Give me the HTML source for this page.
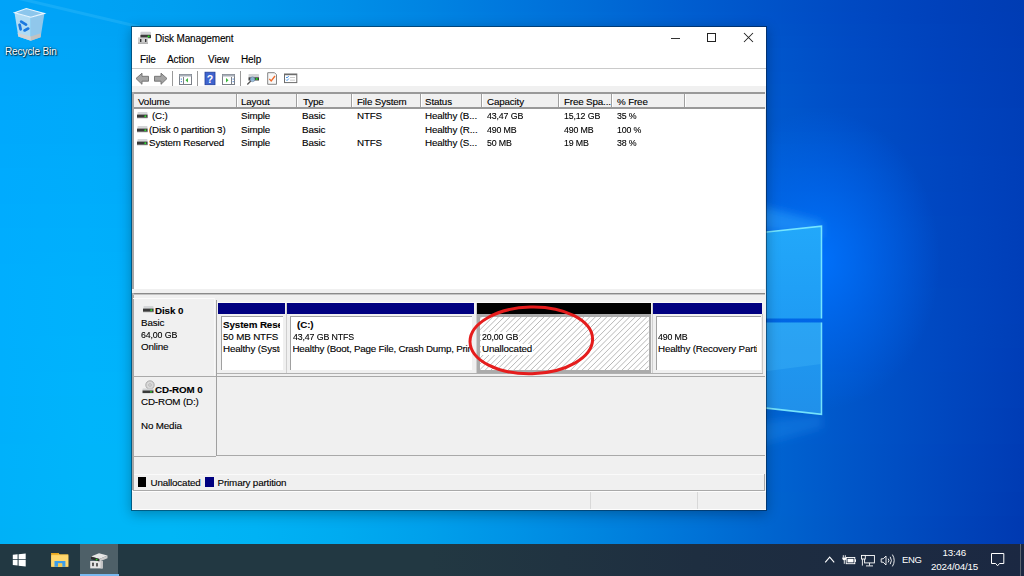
<!DOCTYPE html>
<html><head><meta charset="utf-8">
<style>
*{margin:0;padding:0;box-sizing:border-box}
html,body{width:1024px;height:576px;overflow:hidden}
body{position:relative;font-family:"Liberation Sans",sans-serif;font-size:9.8px;letter-spacing:-0.15px;color:#000;background:linear-gradient(76deg, rgb(0,162,249) 0%, rgb(0,170,247) 10%, rgb(0,170,244) 20%, rgb(0,162,239) 30%, rgb(0,149,232) 40%, rgb(0,133,225) 50%, rgb(0,114,216) 60%, rgb(0,95,206) 70%, rgb(0,78,197) 80%, rgb(0,64,187) 90%, rgb(0,54,177) 100%)}
.a{position:absolute}
.t{position:absolute;white-space:nowrap;line-height:12px;-webkit-text-stroke:0.12px currentColor}
.b{font-weight:bold;-webkit-text-stroke:0}
svg{position:absolute;overflow:visible}
</style></head><body>
<div class="a" style="left:0px;top:0px;width:1024px;height:12px;background:linear-gradient(90deg, rgb(0,163,249) 0.0%, rgb(0,163,245) 8.3%, rgb(0,159,241) 16.7%, rgb(0,152,237) 25.0%, rgb(0,143,232) 33.3%, rgb(0,132,226) 41.7%, rgb(0,119,221) 50.0%, rgb(0,107,214) 58.3%, rgb(0,94,208) 66.7%, rgb(0,83,201) 75.0%, rgb(0,73,194) 83.3%, rgb(0,65,187) 91.7%, rgb(0,60,179) 100.0%)"></div>
<div class="a" style="left:0px;top:12px;width:1024px;height:12px;background:linear-gradient(90deg, rgb(0,163,249) 0.0%, rgb(0,163,246) 8.3%, rgb(0,160,242) 16.7%, rgb(0,153,237) 25.0%, rgb(0,144,233) 33.3%, rgb(0,133,227) 41.7%, rgb(0,120,221) 50.0%, rgb(0,108,215) 58.3%, rgb(0,95,209) 66.7%, rgb(0,83,202) 75.0%, rgb(0,73,195) 83.3%, rgb(0,65,187) 91.7%, rgb(0,60,180) 100.0%)"></div>
<div class="a" style="left:0px;top:24px;width:1024px;height:12px;background:linear-gradient(90deg, rgb(0,164,250) 0.0%, rgb(0,164,246) 8.3%, rgb(0,161,243) 16.7%, rgb(0,154,238) 25.0%, rgb(0,145,233) 33.3%, rgb(0,134,228) 41.7%, rgb(0,121,222) 50.0%, rgb(0,109,216) 58.3%, rgb(0,96,209) 66.7%, rgb(0,84,202) 75.0%, rgb(0,74,195) 83.3%, rgb(0,66,188) 91.7%, rgb(0,60,180) 100.0%)"></div>
<div class="a" style="left:0px;top:36px;width:1024px;height:12px;background:linear-gradient(90deg, rgb(0,165,250) 0.0%, rgb(0,165,247) 8.3%, rgb(0,161,243) 16.7%, rgb(0,155,239) 25.0%, rgb(0,146,234) 33.3%, rgb(0,134,229) 41.7%, rgb(0,122,223) 50.0%, rgb(0,109,217) 58.3%, rgb(0,97,210) 66.7%, rgb(0,85,203) 75.0%, rgb(0,74,196) 83.3%, rgb(0,66,188) 91.7%, rgb(0,60,181) 100.0%)"></div>
<div class="a" style="left:0px;top:48px;width:1024px;height:12px;background:linear-gradient(90deg, rgb(0,165,251) 0.0%, rgb(0,166,247) 8.3%, rgb(0,162,244) 16.7%, rgb(0,156,239) 25.0%, rgb(0,147,235) 33.3%, rgb(0,135,229) 41.7%, rgb(0,123,223) 50.0%, rgb(0,110,217) 58.3%, rgb(0,98,211) 66.7%, rgb(0,86,204) 75.0%, rgb(0,75,196) 83.3%, rgb(0,66,189) 91.7%, rgb(0,61,181) 100.0%)"></div>
<div class="a" style="left:0px;top:60px;width:1024px;height:12px;background:linear-gradient(90deg, rgb(0,166,251) 0.0%, rgb(0,166,248) 8.3%, rgb(0,163,244) 16.7%, rgb(0,157,240) 25.0%, rgb(0,147,235) 33.3%, rgb(0,136,230) 41.7%, rgb(0,124,224) 50.0%, rgb(0,111,218) 58.3%, rgb(0,98,211) 66.7%, rgb(0,86,204) 75.0%, rgb(0,76,197) 83.3%, rgb(0,67,189) 91.7%, rgb(0,61,181) 100.0%)"></div>
<div class="a" style="left:0px;top:72px;width:1024px;height:12px;background:linear-gradient(90deg, rgb(0,167,251) 0.0%, rgb(0,167,248) 8.3%, rgb(0,164,245) 16.7%, rgb(0,157,241) 25.0%, rgb(0,148,236) 33.3%, rgb(0,137,230) 41.7%, rgb(0,125,225) 50.0%, rgb(0,112,218) 58.3%, rgb(0,99,212) 66.7%, rgb(0,87,205) 75.0%, rgb(0,76,197) 83.3%, rgb(0,67,190) 91.7%, rgb(0,61,182) 100.0%)"></div>
<div class="a" style="left:0px;top:84px;width:1024px;height:12px;background:linear-gradient(90deg, rgb(0,167,252) 0.0%, rgb(0,168,249) 8.3%, rgb(0,165,245) 16.7%, rgb(0,158,241) 25.0%, rgb(0,149,236) 33.3%, rgb(0,138,231) 41.7%, rgb(0,126,225) 50.0%, rgb(0,113,219) 58.3%, rgb(0,100,212) 66.7%, rgb(0,88,205) 75.0%, rgb(0,77,198) 83.3%, rgb(0,68,190) 91.7%, rgb(0,61,182) 100.0%)"></div>
<div class="a" style="left:0px;top:96px;width:1024px;height:12px;background:linear-gradient(90deg, rgb(0,168,252) 0.0%, rgb(0,169,249) 8.3%, rgb(0,165,246) 16.7%, rgb(0,159,242) 25.0%, rgb(0,150,237) 33.3%, rgb(0,139,232) 41.7%, rgb(0,127,226) 50.0%, rgb(0,114,220) 58.3%, rgb(0,101,213) 66.7%, rgb(0,88,206) 75.0%, rgb(0,77,198) 83.3%, rgb(0,68,190) 91.7%, rgb(0,61,182) 100.0%)"></div>
<div class="a" style="left:0px;top:108px;width:1024px;height:12px;background:linear-gradient(90deg, rgb(0,168,252) 0.0%, rgb(0,169,250) 8.3%, rgb(0,166,246) 16.7%, rgb(0,160,242) 25.0%, rgb(0,151,237) 33.3%, rgb(0,140,232) 41.7%, rgb(0,128,226) 50.0%, rgb(0,115,220) 58.3%, rgb(0,101,213) 66.7%, rgb(0,89,206) 75.0%, rgb(0,78,199) 83.3%, rgb(0,68,191) 91.7%, rgb(0,62,183) 100.0%)"></div>
<div class="a" style="left:0px;top:120px;width:1024px;height:12px;background:linear-gradient(90deg, rgb(0,169,253) 0.0%, rgb(0,170,250) 8.3%, rgb(0,167,247) 16.7%, rgb(0,161,243) 25.0%, rgb(0,152,238) 33.3%, rgb(0,141,233) 41.7%, rgb(0,128,227) 50.0%, rgb(0,115,221) 58.3%, rgb(0,102,214) 66.7%, rgb(0,89,207) 75.0%, rgb(0,78,199) 83.3%, rgb(0,69,191) 91.7%, rgb(0,62,183) 100.0%)"></div>
<div class="a" style="left:0px;top:132px;width:1024px;height:12px;background:linear-gradient(90deg, rgb(0,169,253) 0.0%, rgb(0,170,250) 8.3%, rgb(0,168,247) 16.7%, rgb(0,162,243) 25.0%, rgb(0,153,238) 33.3%, rgb(0,142,233) 41.7%, rgb(0,129,227) 50.0%, rgb(0,116,221) 58.3%, rgb(0,103,214) 66.7%, rgb(0,90,207) 75.0%, rgb(0,79,199) 83.3%, rgb(0,69,191) 91.7%, rgb(0,62,183) 100.0%)"></div>
<div class="a" style="left:0px;top:144px;width:1024px;height:12px;background:linear-gradient(90deg, rgb(0,170,253) 0.0%, rgb(0,171,251) 8.3%, rgb(0,168,247) 16.7%, rgb(0,162,243) 25.0%, rgb(0,153,239) 33.3%, rgb(0,142,234) 41.7%, rgb(0,130,228) 50.0%, rgb(0,117,222) 58.3%, rgb(0,103,215) 66.7%, rgb(0,91,208) 75.0%, rgb(0,79,200) 83.3%, rgb(0,69,192) 91.7%, rgb(0,62,183) 100.0%)"></div>
<div class="a" style="left:0px;top:156px;width:1024px;height:12px;background:linear-gradient(90deg, rgb(0,170,253) 0.0%, rgb(0,172,251) 8.3%, rgb(0,169,248) 16.7%, rgb(0,163,244) 25.0%, rgb(0,154,239) 33.3%, rgb(0,143,234) 41.7%, rgb(0,131,228) 50.0%, rgb(0,118,222) 58.3%, rgb(0,104,215) 66.7%, rgb(0,91,208) 75.0%, rgb(0,79,200) 83.3%, rgb(0,70,192) 91.7%, rgb(0,62,184) 100.0%)"></div>
<div class="a" style="left:0px;top:168px;width:1024px;height:12px;background:linear-gradient(90deg, rgb(0,171,254) 0.0%, rgb(0,172,251) 8.3%, rgb(0,170,248) 16.7%, rgb(0,164,244) 25.0%, rgb(0,155,240) 33.3%, rgb(0,144,235) 41.7%, rgb(0,132,229) 50.0%, rgb(0,118,222) 58.3%, rgb(0,105,216) 66.7%, rgb(0,92,208) 75.0%, rgb(0,80,200) 83.3%, rgb(0,70,192) 91.7%, rgb(0,62,184) 100.0%)"></div>
<div class="a" style="left:0px;top:180px;width:1024px;height:12px;background:linear-gradient(90deg, rgb(0,171,254) 0.0%, rgb(0,173,251) 8.3%, rgb(0,170,248) 16.7%, rgb(0,164,245) 25.0%, rgb(0,156,240) 33.3%, rgb(0,145,235) 41.7%, rgb(0,132,229) 50.0%, rgb(0,119,223) 58.3%, rgb(0,105,216) 66.7%, rgb(0,92,209) 75.0%, rgb(0,80,201) 83.3%, rgb(0,70,192) 91.7%, rgb(0,62,184) 100.0%)"></div>
<div class="a" style="left:0px;top:192px;width:1024px;height:12px;background:linear-gradient(90deg, rgb(0,171,254) 0.0%, rgb(0,173,252) 8.3%, rgb(0,171,249) 16.7%, rgb(0,165,245) 25.0%, rgb(0,156,240) 33.3%, rgb(0,146,235) 41.7%, rgb(0,133,230) 50.0%, rgb(0,120,223) 58.3%, rgb(0,106,216) 66.7%, rgb(0,93,209) 75.0%, rgb(0,81,201) 83.3%, rgb(0,70,193) 91.7%, rgb(0,62,184) 100.0%)"></div>
<div class="a" style="left:0px;top:204px;width:1024px;height:12px;background:linear-gradient(90deg, rgb(0,172,254) 0.0%, rgb(0,174,252) 8.3%, rgb(0,172,249) 16.7%, rgb(0,166,245) 25.0%, rgb(0,157,241) 33.3%, rgb(0,146,236) 41.7%, rgb(0,134,230) 50.0%, rgb(0,120,224) 58.3%, rgb(0,107,217) 66.7%, rgb(0,93,209) 75.0%, rgb(0,81,201) 83.3%, rgb(0,70,193) 91.7%, rgb(0,62,184) 100.0%)"></div>
<div class="a" style="left:0px;top:216px;width:1024px;height:12px;background:linear-gradient(90deg, rgb(0,172,254) 0.0%, rgb(0,174,252) 8.3%, rgb(0,172,249) 16.7%, rgb(0,167,245) 25.0%, rgb(0,158,241) 33.3%, rgb(0,147,236) 41.7%, rgb(0,135,230) 50.0%, rgb(0,121,224) 58.3%, rgb(0,107,217) 66.7%, rgb(0,94,209) 75.0%, rgb(0,81,201) 83.3%, rgb(0,71,193) 91.7%, rgb(0,62,184) 100.0%)"></div>
<div class="a" style="left:0px;top:228px;width:1024px;height:12px;background:linear-gradient(90deg, rgb(0,173,254) 0.0%, rgb(0,175,252) 8.3%, rgb(0,173,249) 16.7%, rgb(0,167,246) 25.0%, rgb(0,159,241) 33.3%, rgb(0,148,236) 41.7%, rgb(0,135,231) 50.0%, rgb(0,122,224) 58.3%, rgb(0,108,217) 66.7%, rgb(0,94,210) 75.0%, rgb(0,82,202) 83.3%, rgb(0,71,193) 91.7%, rgb(0,62,184) 100.0%)"></div>
<div class="a" style="left:0px;top:240px;width:1024px;height:12px;background:linear-gradient(90deg, rgb(0,173,254) 0.0%, rgb(0,175,252) 8.3%, rgb(0,173,249) 16.7%, rgb(0,168,246) 25.0%, rgb(0,159,242) 33.3%, rgb(0,148,237) 41.7%, rgb(0,136,231) 50.0%, rgb(0,122,224) 58.3%, rgb(0,108,217) 66.7%, rgb(0,95,210) 75.0%, rgb(0,82,202) 83.3%, rgb(0,71,193) 91.7%, rgb(0,62,184) 100.0%)"></div>
<div class="a" style="left:0px;top:252px;width:1024px;height:12px;background:linear-gradient(90deg, rgb(0,173,254) 0.0%, rgb(0,176,252) 8.3%, rgb(0,174,250) 16.7%, rgb(0,168,246) 25.0%, rgb(0,160,242) 33.3%, rgb(0,149,237) 41.7%, rgb(0,137,231) 50.0%, rgb(0,123,225) 58.3%, rgb(0,109,218) 66.7%, rgb(0,95,210) 75.0%, rgb(0,82,202) 83.3%, rgb(0,71,193) 91.7%, rgb(0,62,184) 100.0%)"></div>
<div class="a" style="left:0px;top:264px;width:1024px;height:12px;background:linear-gradient(90deg, rgb(0,174,254) 0.0%, rgb(0,176,252) 8.3%, rgb(0,175,250) 16.7%, rgb(0,169,246) 25.0%, rgb(0,161,242) 33.3%, rgb(0,150,237) 41.7%, rgb(0,137,231) 50.0%, rgb(0,124,225) 58.3%, rgb(0,109,218) 66.7%, rgb(0,96,210) 75.0%, rgb(0,83,202) 83.3%, rgb(0,71,193) 91.7%, rgb(0,62,184) 100.0%)"></div>
<div class="a" style="left:0px;top:276px;width:1024px;height:12px;background:linear-gradient(90deg, rgb(0,174,254) 0.0%, rgb(0,177,252) 8.3%, rgb(0,175,250) 16.7%, rgb(0,170,246) 25.0%, rgb(0,161,242) 33.3%, rgb(0,150,237) 41.7%, rgb(0,138,231) 50.0%, rgb(0,124,225) 58.3%, rgb(0,110,218) 66.7%, rgb(0,96,210) 75.0%, rgb(0,83,202) 83.3%, rgb(0,71,193) 91.7%, rgb(0,62,184) 100.0%)"></div>
<div class="a" style="left:0px;top:288px;width:1024px;height:12px;background:linear-gradient(90deg, rgb(0,174,254) 0.0%, rgb(0,177,252) 8.3%, rgb(0,176,250) 16.7%, rgb(0,170,247) 25.0%, rgb(0,162,242) 33.3%, rgb(0,151,237) 41.7%, rgb(0,138,232) 50.0%, rgb(0,125,225) 58.3%, rgb(0,110,218) 66.7%, rgb(0,96,210) 75.0%, rgb(0,83,202) 83.3%, rgb(0,72,193) 91.7%, rgb(0,62,184) 100.0%)"></div>
<div class="a" style="left:0px;top:300px;width:1024px;height:12px;background:linear-gradient(90deg, rgb(0,175,254) 0.0%, rgb(0,178,252) 8.3%, rgb(0,176,250) 16.7%, rgb(0,171,247) 25.0%, rgb(0,162,242) 33.3%, rgb(0,152,238) 41.7%, rgb(0,139,232) 50.0%, rgb(0,125,225) 58.3%, rgb(0,111,218) 66.7%, rgb(0,97,210) 75.0%, rgb(0,83,202) 83.3%, rgb(0,72,193) 91.7%, rgb(0,62,184) 100.0%)"></div>
<div class="a" style="left:0px;top:312px;width:1024px;height:12px;background:linear-gradient(90deg, rgb(0,175,254) 0.0%, rgb(0,178,252) 8.3%, rgb(0,177,250) 16.7%, rgb(0,171,247) 25.0%, rgb(0,163,243) 33.3%, rgb(0,152,238) 41.7%, rgb(0,140,232) 50.0%, rgb(0,126,225) 58.3%, rgb(0,111,218) 66.7%, rgb(0,97,210) 75.0%, rgb(0,84,202) 83.3%, rgb(0,72,193) 91.7%, rgb(0,62,184) 100.0%)"></div>
<div class="a" style="left:0px;top:324px;width:1024px;height:12px;background:linear-gradient(90deg, rgb(0,175,254) 0.0%, rgb(0,178,252) 8.3%, rgb(0,177,250) 16.7%, rgb(0,172,247) 25.0%, rgb(0,164,243) 33.3%, rgb(0,153,238) 41.7%, rgb(0,140,232) 50.0%, rgb(0,126,226) 58.3%, rgb(0,112,218) 66.7%, rgb(0,97,211) 75.0%, rgb(0,84,202) 83.3%, rgb(0,72,193) 91.7%, rgb(0,62,183) 100.0%)"></div>
<div class="a" style="left:0px;top:336px;width:1024px;height:12px;background:linear-gradient(90deg, rgb(0,175,254) 0.0%, rgb(0,179,252) 8.3%, rgb(0,177,250) 16.7%, rgb(0,172,247) 25.0%, rgb(0,164,243) 33.3%, rgb(0,153,238) 41.7%, rgb(0,141,232) 50.0%, rgb(0,127,226) 58.3%, rgb(0,112,218) 66.7%, rgb(0,98,211) 75.0%, rgb(0,84,202) 83.3%, rgb(0,72,193) 91.7%, rgb(0,62,183) 100.0%)"></div>
<div class="a" style="left:0px;top:348px;width:1024px;height:12px;background:linear-gradient(90deg, rgb(0,175,253) 0.0%, rgb(0,179,252) 8.3%, rgb(0,178,250) 16.7%, rgb(0,173,247) 25.0%, rgb(0,165,243) 33.3%, rgb(0,154,238) 41.7%, rgb(0,141,232) 50.0%, rgb(0,127,226) 58.3%, rgb(0,113,218) 66.7%, rgb(0,98,210) 75.0%, rgb(0,84,202) 83.3%, rgb(0,72,193) 91.7%, rgb(0,61,183) 100.0%)"></div>
<div class="a" style="left:0px;top:360px;width:1024px;height:12px;background:linear-gradient(90deg, rgb(0,176,253) 0.0%, rgb(0,179,252) 8.3%, rgb(0,178,250) 16.7%, rgb(0,173,247) 25.0%, rgb(0,165,243) 33.3%, rgb(0,154,238) 41.7%, rgb(0,142,232) 50.0%, rgb(0,128,226) 58.3%, rgb(0,113,218) 66.7%, rgb(0,98,210) 75.0%, rgb(0,84,202) 83.3%, rgb(0,72,193) 91.7%, rgb(0,61,183) 100.0%)"></div>
<div class="a" style="left:0px;top:372px;width:1024px;height:12px;background:linear-gradient(90deg, rgb(0,176,253) 0.0%, rgb(0,180,252) 8.3%, rgb(0,179,250) 16.7%, rgb(0,174,247) 25.0%, rgb(0,166,243) 33.3%, rgb(0,155,238) 41.7%, rgb(0,142,232) 50.0%, rgb(0,128,226) 58.3%, rgb(0,113,218) 66.7%, rgb(0,99,210) 75.0%, rgb(0,85,202) 83.3%, rgb(0,72,192) 91.7%, rgb(0,61,182) 100.0%)"></div>
<div class="a" style="left:0px;top:384px;width:1024px;height:12px;background:linear-gradient(90deg, rgb(0,176,253) 0.0%, rgb(0,180,252) 8.3%, rgb(0,179,250) 16.7%, rgb(0,174,247) 25.0%, rgb(0,166,243) 33.3%, rgb(0,155,238) 41.7%, rgb(0,143,232) 50.0%, rgb(0,129,226) 58.3%, rgb(0,114,218) 66.7%, rgb(0,99,210) 75.0%, rgb(0,85,202) 83.3%, rgb(0,72,192) 91.7%, rgb(0,61,182) 100.0%)"></div>
<div class="a" style="left:0px;top:396px;width:1024px;height:12px;background:linear-gradient(90deg, rgb(0,176,252) 0.0%, rgb(0,180,251) 8.3%, rgb(0,179,249) 16.7%, rgb(0,175,246) 25.0%, rgb(0,167,243) 33.3%, rgb(0,156,238) 41.7%, rgb(0,143,232) 50.0%, rgb(0,129,226) 58.3%, rgb(0,114,218) 66.7%, rgb(0,99,210) 75.0%, rgb(0,85,201) 83.3%, rgb(0,72,192) 91.7%, rgb(0,61,182) 100.0%)"></div>
<div class="a" style="left:0px;top:408px;width:1024px;height:12px;background:linear-gradient(90deg, rgb(0,176,252) 0.0%, rgb(0,180,251) 8.3%, rgb(0,180,249) 16.7%, rgb(0,175,246) 25.0%, rgb(0,167,242) 33.3%, rgb(0,156,238) 41.7%, rgb(0,144,232) 50.0%, rgb(0,129,225) 58.3%, rgb(0,114,218) 66.7%, rgb(0,99,210) 75.0%, rgb(0,85,201) 83.3%, rgb(0,72,192) 91.7%, rgb(0,60,181) 100.0%)"></div>
<div class="a" style="left:0px;top:420px;width:1024px;height:12px;background:linear-gradient(90deg, rgb(0,176,252) 0.0%, rgb(0,181,251) 8.3%, rgb(0,180,249) 16.7%, rgb(0,176,246) 25.0%, rgb(0,168,242) 33.3%, rgb(0,157,238) 41.7%, rgb(0,144,232) 50.0%, rgb(0,130,225) 58.3%, rgb(0,115,218) 66.7%, rgb(0,100,210) 75.0%, rgb(0,85,201) 83.3%, rgb(0,72,191) 91.7%, rgb(0,60,181) 100.0%)"></div>
<div class="a" style="left:0px;top:432px;width:1024px;height:12px;background:linear-gradient(90deg, rgb(0,176,251) 0.0%, rgb(0,181,251) 8.3%, rgb(0,180,249) 16.7%, rgb(0,176,246) 25.0%, rgb(0,168,242) 33.3%, rgb(0,157,237) 41.7%, rgb(0,144,232) 50.0%, rgb(0,130,225) 58.3%, rgb(0,115,218) 66.7%, rgb(0,100,210) 75.0%, rgb(0,85,201) 83.3%, rgb(0,72,191) 91.7%, rgb(0,60,181) 100.0%)"></div>
<div class="a" style="left:0px;top:444px;width:1024px;height:12px;background:linear-gradient(90deg, rgb(0,177,251) 0.0%, rgb(0,181,250) 8.3%, rgb(0,181,249) 16.7%, rgb(0,176,246) 25.0%, rgb(0,168,242) 33.3%, rgb(0,158,237) 41.7%, rgb(0,145,232) 50.0%, rgb(0,130,225) 58.3%, rgb(0,115,218) 66.7%, rgb(0,100,209) 75.0%, rgb(0,85,200) 83.3%, rgb(0,71,191) 91.7%, rgb(0,59,180) 100.0%)"></div>
<div class="a" style="left:0px;top:456px;width:1024px;height:12px;background:linear-gradient(90deg, rgb(0,177,251) 0.0%, rgb(0,181,250) 8.3%, rgb(0,181,248) 16.7%, rgb(0,177,246) 25.0%, rgb(0,169,242) 33.3%, rgb(0,158,237) 41.7%, rgb(0,145,231) 50.0%, rgb(0,131,225) 58.3%, rgb(0,116,217) 66.7%, rgb(0,100,209) 75.0%, rgb(0,85,200) 83.3%, rgb(0,71,190) 91.7%, rgb(0,59,180) 100.0%)"></div>
<div class="a" style="left:0px;top:468px;width:1024px;height:12px;background:linear-gradient(90deg, rgb(0,177,250) 0.0%, rgb(0,181,250) 8.3%, rgb(0,181,248) 16.7%, rgb(0,177,245) 25.0%, rgb(0,169,242) 33.3%, rgb(0,158,237) 41.7%, rgb(0,146,231) 50.0%, rgb(0,131,225) 58.3%, rgb(0,116,217) 66.7%, rgb(0,100,209) 75.0%, rgb(0,85,200) 83.3%, rgb(0,71,190) 91.7%, rgb(0,59,179) 100.0%)"></div>
<div class="a" style="left:0px;top:480px;width:1024px;height:12px;background:linear-gradient(90deg, rgb(0,177,250) 0.0%, rgb(0,182,249) 8.3%, rgb(0,182,248) 16.7%, rgb(0,177,245) 25.0%, rgb(0,169,241) 33.3%, rgb(0,159,237) 41.7%, rgb(0,146,231) 50.0%, rgb(0,131,224) 58.3%, rgb(0,116,217) 66.7%, rgb(0,100,209) 75.0%, rgb(0,85,199) 83.3%, rgb(0,71,189) 91.7%, rgb(0,59,179) 100.0%)"></div>
<div class="a" style="left:0px;top:492px;width:1024px;height:12px;background:linear-gradient(90deg, rgb(0,177,249) 0.0%, rgb(0,182,249) 8.3%, rgb(0,182,247) 16.7%, rgb(0,178,245) 25.0%, rgb(0,170,241) 33.3%, rgb(0,159,236) 41.7%, rgb(0,146,231) 50.0%, rgb(0,132,224) 58.3%, rgb(0,116,217) 66.7%, rgb(0,101,208) 75.0%, rgb(0,85,199) 83.3%, rgb(0,71,189) 91.7%, rgb(0,58,178) 100.0%)"></div>
<div class="a" style="left:0px;top:504px;width:1024px;height:12px;background:linear-gradient(90deg, rgb(0,177,249) 0.0%, rgb(0,182,248) 8.3%, rgb(0,182,247) 16.7%, rgb(0,178,244) 25.0%, rgb(0,170,241) 33.3%, rgb(0,160,236) 41.7%, rgb(0,147,230) 50.0%, rgb(0,132,224) 58.3%, rgb(0,116,216) 66.7%, rgb(0,101,208) 75.0%, rgb(0,85,199) 83.3%, rgb(0,71,189) 91.7%, rgb(0,58,178) 100.0%)"></div>
<div class="a" style="left:0px;top:516px;width:1024px;height:12px;background:linear-gradient(90deg, rgb(0,177,248) 0.0%, rgb(0,182,248) 8.3%, rgb(0,182,246) 16.7%, rgb(0,178,244) 25.0%, rgb(0,170,240) 33.3%, rgb(0,160,236) 41.7%, rgb(0,147,230) 50.0%, rgb(0,132,223) 58.3%, rgb(0,117,216) 66.7%, rgb(0,101,207) 75.0%, rgb(0,85,198) 83.3%, rgb(0,70,188) 91.7%, rgb(0,57,177) 100.0%)"></div>
<div class="a" style="left:0px;top:528px;width:1024px;height:12px;background:linear-gradient(90deg, rgb(0,177,247) 0.0%, rgb(0,182,247) 8.3%, rgb(0,182,246) 16.7%, rgb(0,178,244) 25.0%, rgb(0,171,240) 33.3%, rgb(0,160,235) 41.7%, rgb(0,147,230) 50.0%, rgb(0,133,223) 58.3%, rgb(0,117,216) 66.7%, rgb(0,101,207) 75.0%, rgb(0,85,198) 83.3%, rgb(0,70,187) 91.7%, rgb(0,57,177) 100.0%)"></div>
<div class="a" style="left:0px;top:540px;width:1024px;height:12px;background:linear-gradient(90deg, rgb(0,177,247) 0.0%, rgb(0,182,247) 8.3%, rgb(0,183,246) 16.7%, rgb(0,179,243) 25.0%, rgb(0,171,240) 33.3%, rgb(0,160,235) 41.7%, rgb(0,147,229) 50.0%, rgb(0,133,223) 58.3%, rgb(0,117,215) 66.7%, rgb(0,101,207) 75.0%, rgb(0,85,197) 83.3%, rgb(0,70,187) 91.7%, rgb(0,57,176) 100.0%)"></div>
<div class="a" style="left:0px;top:552px;width:1024px;height:12px;background:linear-gradient(90deg, rgb(0,177,246) 0.0%, rgb(0,182,246) 8.3%, rgb(0,183,245) 16.7%, rgb(0,179,243) 25.0%, rgb(0,171,239) 33.3%, rgb(0,161,235) 41.7%, rgb(0,148,229) 50.0%, rgb(0,133,222) 58.3%, rgb(0,117,215) 66.7%, rgb(0,101,206) 75.0%, rgb(0,85,197) 83.3%, rgb(0,70,186) 91.7%, rgb(0,56,175) 100.0%)"></div>
<div class="a" style="left:0px;top:564px;width:1024px;height:12px;background:linear-gradient(90deg, rgb(0,177,246) 0.0%, rgb(0,182,246) 8.3%, rgb(0,183,245) 16.7%, rgb(0,179,242) 25.0%, rgb(0,172,239) 33.3%, rgb(0,161,234) 41.7%, rgb(0,148,229) 50.0%, rgb(0,133,222) 58.3%, rgb(0,117,214) 66.7%, rgb(0,101,206) 75.0%, rgb(0,85,196) 83.3%, rgb(0,69,186) 91.7%, rgb(0,56,175) 100.0%)"></div>
<div class="a" style="left:700px;top:110px;width:240px;height:300px;background:radial-gradient(closest-side, rgba(0,115,255,0.9), rgba(0,112,255,0.45) 50%, rgba(0,100,240,0))"></div>
<svg style="left:0;top:0" width="1024" height="576"><defs><linearGradient id="pg1" x1="0" y1="0" x2="0" y2="1"><stop offset="0" stop-color="#22a8fa"/><stop offset="1" stop-color="#1f9cf4"/></linearGradient><linearGradient id="pg2" x1="0" y1="0" x2="0" y2="1"><stop offset="0" stop-color="#1f9af2"/><stop offset="1" stop-color="#2090ea"/></linearGradient><filter id="bl" x="-50%" y="-50%" width="200%" height="200%"><feGaussianBlur stdDeviation="4"/></filter></defs><polygon points="700,190 822,222 822,238 700,222" fill="#30a8ff" fill-opacity="0.5" filter="url(#bl)"/><polygon points="700,430 822,414 822,428 700,462" fill="#30a8ff" fill-opacity="0.22" filter="url(#bl)"/><polygon points="760,232.6 821.5,226.2 821.5,318.4 760,318.4" fill="url(#pg1)"/><polygon points="760,322.4 821.5,322.4 821.5,414.3 760,407.4" fill="url(#pg2)"/><path d="M760,232.6 L821.5,226.2 L821.5,318.4" fill="none" stroke="#80eeff" stroke-opacity="0.9" stroke-width="1.5"/><path d="M760,407.4 L821.5,414.3 L821.5,322.4" fill="none" stroke="#80eeff" stroke-opacity="0.9" stroke-width="1.5"/><polygon points="760,322.4 821.5,322.4 821.5,364 760,372" fill="#5cd0ff" fill-opacity="0.18"/></svg>
<svg style="left:0;top:0" width="200" height="60"><path d="M0 -6 L140 27" stroke="#8fe0ff" stroke-opacity="0.14" stroke-width="3"/></svg>
<svg style="left:0;top:0" width="60" height="60"><polygon points="14.5,12.7 30.8,17.2 30.8,40.8 18.3,36.6" fill="#b9def3" fill-opacity="0.95"/><polygon points="30.8,17.2 44.4,13.4 40.6,37.3 30.8,40.8" fill="#98c9ea" fill-opacity="0.95"/><polygon points="17.6,33 30.8,36.5 30.8,40.8 18.3,36.6" fill="#d4d4d4"/><polygon points="30.8,36.5 40.9,33.2 40.6,37.3 30.8,40.8" fill="#c2c2c2"/><polygon points="14.5,12.7 26.3,8.5 44.4,13.4 30.8,17.2" fill="#8cc6ec" stroke="#eaf6ff" stroke-width="1.1"/><g fill="none" stroke="#1a78e0" stroke-width="2.8" stroke-linecap="round"><path d="M21.2 21.6 L26 24.6"/><path d="M19.6 24.8 L20.6 29.3"/><path d="M24.6 30.4 L28.2 28.6"/></g></svg>
<div class="t" style="left:5px;top:46px;color:#fff;font-size:10px;letter-spacing:-0.1px;-webkit-text-stroke:0;text-shadow:0 0 2px rgba(0,0,0,0.9),1px 1px 1px rgba(0,0,0,0.7)">Recycle Bin</div>
<div class="a" style="left:131px;top:26px;width:636px;height:485px;box-shadow:0 3px 12px rgba(0,0,0,0.28)"></div>
<div class="a" style="left:131px;top:26px;width:636px;height:485px;border:1px solid rgba(0,20,40,0.55);background:#f0f0f0;background-clip:padding-box"></div>
<div class="a" style="left:132px;top:27px;width:634px;height:59px;background:#fff"></div>
<div class="a" style="left:132px;top:68px;width:634px;height:1px;background:#cacaca"></div>
<div class="t" style="left:155px;top:33px;font-size:10px;letter-spacing:-0.15px">Disk Management</div>
<div class="t" style="left:140px;top:54px;font-size:10px;letter-spacing:-0.1px">File</div>
<div class="t" style="left:167px;top:54px;font-size:10px;letter-spacing:-0.1px">Action</div>
<div class="t" style="left:208px;top:54px;font-size:10px;letter-spacing:-0.1px">View</div>
<div class="t" style="left:241px;top:54px;font-size:10px;letter-spacing:-0.1px">Help</div>
<div class="a" style="left:133px;top:92px;width:632px;height:196.5px;background:#fff"></div>
<div class="a" style="left:132px;top:92px;width:2px;height:196.5px;background:#a6a6a6"></div>
<div class="a" style="left:134px;top:92px;width:631px;height:2px;background:#999"></div>
<div class="a" style="left:134px;top:94px;width:631px;height:13px;background:#f0f0f0"></div>
<div class="a" style="left:134px;top:107px;width:631px;height:2px;background:#999"></div>
<div class="t" style="left:138px;top:96px;">Volume</div>
<div class="t" style="left:241px;top:96px;">Layout</div>
<div class="t" style="left:303px;top:96px;">Type</div>
<div class="t" style="left:357px;top:96px;">File System</div>
<div class="t" style="left:425px;top:96px;">Status</div>
<div class="t" style="left:487px;top:96px;">Capacity</div>
<div class="t" style="left:564px;top:96px;">Free Spa...</div>
<div class="t" style="left:617px;top:96px;">% Free</div>
<div class="a" style="left:236px;top:94px;width:1px;height:13px;background:#a0a0a0"></div>
<div class="a" style="left:237px;top:94px;width:1px;height:13px;background:#fff"></div>
<div class="a" style="left:296px;top:94px;width:1px;height:13px;background:#a0a0a0"></div>
<div class="a" style="left:297px;top:94px;width:1px;height:13px;background:#fff"></div>
<div class="a" style="left:351px;top:94px;width:1px;height:13px;background:#a0a0a0"></div>
<div class="a" style="left:352px;top:94px;width:1px;height:13px;background:#fff"></div>
<div class="a" style="left:420px;top:94px;width:1px;height:13px;background:#a0a0a0"></div>
<div class="a" style="left:421px;top:94px;width:1px;height:13px;background:#fff"></div>
<div class="a" style="left:481px;top:94px;width:1px;height:13px;background:#a0a0a0"></div>
<div class="a" style="left:482px;top:94px;width:1px;height:13px;background:#fff"></div>
<div class="a" style="left:558px;top:94px;width:1px;height:13px;background:#a0a0a0"></div>
<div class="a" style="left:559px;top:94px;width:1px;height:13px;background:#fff"></div>
<div class="a" style="left:611px;top:94px;width:1px;height:13px;background:#a0a0a0"></div>
<div class="a" style="left:612px;top:94px;width:1px;height:13px;background:#fff"></div>
<div class="a" style="left:684px;top:94px;width:1px;height:13px;background:#a0a0a0"></div>
<div class="a" style="left:685px;top:94px;width:1px;height:13px;background:#fff"></div>
<div class="t" style="left:152px;top:110px;">(C:)</div>
<div class="t" style="left:241px;top:110px;">Simple</div>
<div class="t" style="left:302px;top:110px;">Basic</div>
<div class="t" style="left:357px;top:110px;">NTFS</div>
<div class="t" style="left:425px;top:110px;">Healthy (B...</div>
<div class="t" style="left:487px;top:110px;"><span style="display:inline-block;transform:scaleX(0.9);transform-origin:0 0">43,47 GB</span></div>
<div class="t" style="left:564px;top:110px;"><span style="display:inline-block;transform:scaleX(0.9);transform-origin:0 0">15,12 GB</span></div>
<div class="t" style="left:617px;top:110px;"><span style="display:inline-block;transform:scaleX(0.9);transform-origin:0 0">35 %</span></div>
<div class="t" style="left:149px;top:124px;">(Disk 0 partition 3)</div>
<div class="t" style="left:241px;top:124px;">Simple</div>
<div class="t" style="left:302px;top:124px;">Basic</div>
<div class="t" style="left:357px;top:124px;"></div>
<div class="t" style="left:425px;top:124px;">Healthy (R...</div>
<div class="t" style="left:487px;top:124px;"><span style="display:inline-block;transform:scaleX(0.9);transform-origin:0 0">490 MB</span></div>
<div class="t" style="left:564px;top:124px;"><span style="display:inline-block;transform:scaleX(0.9);transform-origin:0 0">490 MB</span></div>
<div class="t" style="left:617px;top:124px;"><span style="display:inline-block;transform:scaleX(0.9);transform-origin:0 0">100 %</span></div>
<div class="t" style="left:149px;top:137px;">System Reserved</div>
<div class="t" style="left:241px;top:137px;">Simple</div>
<div class="t" style="left:302px;top:137px;">Basic</div>
<div class="t" style="left:357px;top:137px;">NTFS</div>
<div class="t" style="left:425px;top:137px;">Healthy (S...</div>
<div class="t" style="left:487px;top:137px;"><span style="display:inline-block;transform:scaleX(0.9);transform-origin:0 0">50 MB</span></div>
<div class="t" style="left:564px;top:137px;"><span style="display:inline-block;transform:scaleX(0.9);transform-origin:0 0">19 MB</span></div>
<div class="t" style="left:617px;top:137px;"><span style="display:inline-block;transform:scaleX(0.9);transform-origin:0 0">38 %</span></div>
<svg style="left:136.5px;top:112px" width="12" height="7" viewBox="0 0 12 7"><rect x="0.5" y="0" width="10" height="3.2" rx="0.8" fill="#d4d6d8"/><rect x="0" y="2.6" width="10.6" height="3.4" fill="#3a3a3a"/><rect x="0" y="5.6" width="10.6" height="0.8" fill="#bbb"/><circle cx="8.3" cy="4.3" r="1.0" fill="#2ee02e"/></svg>
<svg style="left:136.5px;top:125.5px" width="12" height="7" viewBox="0 0 12 7"><rect x="0.5" y="0" width="10" height="3.2" rx="0.8" fill="#d4d6d8"/><rect x="0" y="2.6" width="10.6" height="3.4" fill="#3a3a3a"/><rect x="0" y="5.6" width="10.6" height="0.8" fill="#bbb"/><circle cx="8.3" cy="4.3" r="1.0" fill="#2ee02e"/></svg>
<svg style="left:136.5px;top:139px" width="12" height="7" viewBox="0 0 12 7"><rect x="0.5" y="0" width="10" height="3.2" rx="0.8" fill="#d4d6d8"/><rect x="0" y="2.6" width="10.6" height="3.4" fill="#3a3a3a"/><rect x="0" y="5.6" width="10.6" height="0.8" fill="#bbb"/><circle cx="8.3" cy="4.3" r="1.0" fill="#2ee02e"/></svg>
<svg style="left:137px;top:31px" width="16" height="14" viewBox="0 0 16 14"><rect x="3.4" y="0.8" width="10.6" height="3.4" rx="1" fill="#d0d2d4"/><rect x="3.4" y="3.8" width="10.6" height="3.4" rx="0.6" fill="#3c3c3c"/><circle cx="11.6" cy="5.5" r="1.1" fill="#22e022"/><rect x="1" y="6.4" width="10" height="6.4" fill="#cfcfcf"/><rect x="1" y="11.6" width="10" height="1.2" fill="#a8a8a8"/><rect x="3" y="8" width="1.4" height="3" fill="#333"/><rect x="8" y="8" width="1.4" height="3" fill="#333"/></svg>
<div class="a" style="left:671px;top:38px;width:9px;height:1px;background:#333"></div>
<div class="a" style="left:707px;top:33px;width:9px;height:9px;border:1px solid #222"></div>
<svg style="left:743px;top:32px" width="11" height="11" viewBox="0 0 11 11"><path d="M1 1 L10 10 M10 1 L1 10" stroke="#222" stroke-width="1.05"/></svg>
<svg style="left:0;top:0" width="1024" height="100"><path d="M136 78.5 L142 73.2 L142 76.3 L148.5 76.3 L148.5 81.2 L142 81.2 L142 84.3 Z" fill="#a4a4a4" stroke="#6e6e6e" stroke-width="0.9" stroke-linejoin="round"/><path d="M167 78.5 L161 73.2 L161 76.3 L154.5 76.3 L154.5 81.2 L161 81.2 L161 84.3 Z" fill="#a4a4a4" stroke="#6e6e6e" stroke-width="0.9" stroke-linejoin="round"/><rect x="172" y="71" width="1" height="15" fill="#9a9a9a"/><rect x="197" y="71" width="1" height="15" fill="#9a9a9a"/><rect x="240" y="71" width="1" height="15" fill="#9a9a9a"/><rect x="179.5" y="74.5" width="12" height="10" fill="#fff" stroke="#7b8088" stroke-width="1"/><rect x="179.5" y="74.5" width="12" height="2" fill="#a9b0ba"/><rect x="183" y="77" width="1" height="7.5" fill="#7b8088"/><rect x="180.8" y="78.5" width="1.2" height="1.2" fill="#5a8fd8"/><rect x="180.8" y="81" width="1.2" height="1.2" fill="#5a8fd8"/><path d="M185.5 80.3 L188 78 L188 82.6 Z" fill="#3cb83c"/><rect x="205" y="72.2" width="10" height="12.5" fill="#3f64cf" stroke="#223f9a" stroke-width="0.8"/><text x="210" y="82.6" font-family="Liberation Sans" font-weight="bold" font-size="10.5" fill="#fff" text-anchor="middle">?</text><rect x="222.5" y="74.5" width="12" height="10" fill="#fff" stroke="#7b8088" stroke-width="1"/><rect x="222.5" y="74.5" width="12" height="2" fill="#a9b0ba"/><rect x="231" y="77" width="1" height="7.5" fill="#7b8088"/><rect x="232.6" y="78.5" width="1.2" height="1.2" fill="#5a8fd8"/><rect x="232.6" y="81" width="1.2" height="1.2" fill="#5a8fd8"/><path d="M228.5 80.3 L226 78 L226 82.6 Z" fill="#3cb83c"/><rect x="248.5" y="74" width="10.5" height="3.5" rx="0.8" fill="#d0d2d4"/><rect x="248.5" y="77.3" width="10.5" height="3.2" fill="#3a3a3a"/><circle cx="256.8" cy="79" r="1.1" fill="#22e022"/><circle cx="252.5" cy="79.3" r="2.4" fill="#9ac4e8" fill-opacity="0.85" stroke="#6d8aa8" stroke-width="0.7"/><path d="M250.8 81 L247.3 84.5" stroke="#555" stroke-width="1.2"/><path d="M267.7 72.7 L274.5 72.7 L276.5 74.7 L276.5 84.3 L267.7 84.3 Z" fill="#f8f8f8" stroke="#777" stroke-width="0.9"/><path d="M269.3 78.8 L271.2 81 L275 76" stroke="#f06a2a" stroke-width="1.3" fill="none"/><rect x="284.5" y="74" width="12.3" height="8.6" fill="#fff" stroke="#6c6c6c" stroke-width="1"/><rect x="284.5" y="74" width="12.3" height="1.2" fill="#6c6c6c"/><path d="M286 77 L287 78 L288.8 76 M286 79.6 L287 80.6 L288.8 78.6" stroke="#3b8ee8" stroke-width="0.9" fill="none"/><rect x="290" y="77" width="5" height="0.6" fill="#aaa"/><rect x="290" y="79.8" width="5" height="0.6" fill="#aaa"/></svg>
<div class="a" style="left:133px;top:293px;width:632px;height:1px;background:#8a8a8a"></div>
<div class="a" style="left:132px;top:293px;width:2px;height:197px;background:#a6a6a6"></div>
<div class="a" style="left:133px;top:294px;width:632px;height:1px;background:#c4c4c4"></div>
<div class="a" style="left:133px;top:298px;width:82px;height:1px;background:#fbfbfb"></div>
<div class="a" style="left:214px;top:298px;width:1px;height:78px;background:#f8f8f8"></div>
<div class="a" style="left:133px;top:376px;width:83px;height:1px;background:#a9a9a9"></div>
<div class="a" style="left:216px;top:300px;width:1px;height:156px;background:#a0a0a0"></div>
<div class="a" style="left:217px;top:302px;width:546px;height:1px;background:#fafafa"></div>
<svg style="left:142.5px;top:305.5px" width="12" height="7" viewBox="0 0 12 7"><rect x="0.5" y="0" width="10" height="3.2" rx="0.8" fill="#d4d6d8"/><rect x="0" y="2.6" width="10.6" height="3.4" fill="#3a3a3a"/><rect x="0" y="5.6" width="10.6" height="0.8" fill="#bbb"/><circle cx="8.3" cy="4.3" r="1.0" fill="#2ee02e"/></svg>
<div class="t" style="left:155px;top:305px;font-weight:bold;-webkit-text-stroke:0.1px;letter-spacing:-0.1px">Disk 0</div>
<div class="t" style="left:141px;top:317px;">Basic</div>
<div class="t" style="left:141px;top:329px;"><span style="display:inline-block;transform:scaleX(0.9);transform-origin:0 0">64,00 GB</span></div>
<div class="t" style="left:141px;top:341px;">Online</div>
<div class="a" style="left:217.7px;top:303px;width:67.30000000000001px;height:10.5px;background:#000080"></div>
<div class="a" style="left:287.1px;top:303px;width:187.09999999999997px;height:10.5px;background:#000080"></div>
<div class="a" style="left:476.8px;top:303px;width:173.8px;height:10.5px;background:#000"></div>
<div class="a" style="left:652.8px;top:303px;width:109.0px;height:10.5px;background:#000080"></div>
<div class="a" style="left:286px;top:303px;width:1px;height:70px;background:#cfcfcf"></div>
<div class="a" style="left:475.5px;top:303px;width:1px;height:70px;background:#cfcfcf"></div>
<div class="a" style="left:651.7px;top:303px;width:1px;height:70px;background:#cfcfcf"></div>
<div class="a" style="left:220.5px;top:316px;width:62.5px;height:54px;background:#fff;border-top:1px solid #a0a0a0;border-left:1px solid #a0a0a0"></div>
<div class="a" style="left:290px;top:316px;width:182.2px;height:54px;background:#fff;border-top:1px solid #a0a0a0;border-left:1px solid #a0a0a0"></div>
<div class="a" style="left:655.5px;top:316px;width:105.0px;height:54px;background:#fff;border-top:1px solid #a0a0a0;border-left:1px solid #a0a0a0"></div>
<div class="a" style="left:476.8px;top:313.6px;width:173.9px;height:59px;background:#ababab"></div>
<div class="a" style="left:479.6px;top:316.6px;width:169px;height:53.4px;background:#fff"></div>
<svg style="left:0;top:0" width="1024" height="576"><defs><clipPath id="hc"><rect x="479.6" y="316.6" width="169" height="53.4"/></clipPath></defs><path clip-path="url(#hc)" d="M422.60 370 L476.00 316.6 M428.30 370 L481.70 316.6 M434.00 370 L487.40 316.6 M439.70 370 L493.10 316.6 M445.40 370 L498.80 316.6 M451.10 370 L504.50 316.6 M456.80 370 L510.20 316.6 M462.50 370 L515.90 316.6 M468.20 370 L521.60 316.6 M473.90 370 L527.30 316.6 M479.60 370 L533.00 316.6 M485.30 370 L538.70 316.6 M491.00 370 L544.40 316.6 M496.70 370 L550.10 316.6 M502.40 370 L555.80 316.6 M508.10 370 L561.50 316.6 M513.80 370 L567.20 316.6 M519.50 370 L572.90 316.6 M525.20 370 L578.60 316.6 M530.90 370 L584.30 316.6 M536.60 370 L590.00 316.6 M542.30 370 L595.70 316.6 M548.00 370 L601.40 316.6 M553.70 370 L607.10 316.6 M559.40 370 L612.80 316.6 M565.10 370 L618.50 316.6 M570.80 370 L624.20 316.6 M576.50 370 L629.90 316.6 M582.20 370 L635.60 316.6 M587.90 370 L641.30 316.6 M593.60 370 L647.00 316.6 M599.30 370 L652.70 316.6 M605.00 370 L658.40 316.6 M610.70 370 L664.10 316.6 M616.40 370 L669.80 316.6 M622.10 370 L675.50 316.6 M627.80 370 L681.20 316.6 M633.50 370 L686.90 316.6 M639.20 370 L692.60 316.6 M644.90 370 L698.30 316.6 M650.60 370 L704.00 316.6 M656.30 370 L709.70 316.6 M662.00 370 L715.40 316.6 M667.70 370 L721.10 316.6 M673.40 370 L726.80 316.6 M679.10 370 L732.50 316.6 M684.80 370 L738.20 316.6 M690.50 370 L743.90 316.6 M696.20 370 L749.60 316.6 M701.90 370 L755.30 316.6" stroke="#a4a4a4" stroke-width="0.8" fill="none"/></svg>
<div class="a" style="left:762px;top:314px;width:1px;height:59px;background:#c8c8c8"></div>
<div class="a" style="left:217px;top:373px;width:546px;height:1px;background:#b0b0b0"></div>
<div class="a" style="left:217px;top:376px;width:548px;height:1px;background:#a9a9a9"></div>
<div class="t" style="left:223px;top:319px;font-weight:bold;-webkit-text-stroke:0.1px;letter-spacing:-0.1px;width:57px;overflow:hidden">System Reserved</div>
<div class="t" style="left:223px;top:331px;">50 MB NTFS</div>
<div class="t" style="left:223px;top:343px;;width:57px;overflow:hidden">Healthy (System, Active, Primary Partition)</div>
<div class="t" style="left:297px;top:319px;font-weight:bold;-webkit-text-stroke:0.1px;letter-spacing:-0.1px">(C:)</div>
<div class="t" style="left:292.5px;top:331px;"><span style="display:inline-block;transform:scaleX(0.9);transform-origin:0 0">43,47 GB NTFS</span></div>
<div class="t" style="left:292.5px;top:343px;letter-spacing:-0.22px;width:177.5px;overflow:hidden">Healthy (Boot, Page File, Crash Dump, Primary Partition)</div>
<div class="a" style="left:481px;top:332px;width:38px;height:12px;background:#fff"></div>
<div class="a" style="left:481px;top:344px;width:52px;height:11px;background:#fff"></div>
<div class="t" style="left:482px;top:331px;"><span style="display:inline-block;transform:scaleX(0.9);transform-origin:0 0">20,00 GB</span></div>
<div class="t" style="left:482px;top:343px;">Unallocated</div>
<div class="t" style="left:658px;top:331px;"><span style="display:inline-block;transform:scaleX(0.9);transform-origin:0 0">490 MB</span></div>
<div class="t" style="left:658px;top:343px;;width:99px;overflow:hidden">Healthy (Recovery Partition)</div>
<svg style="left:142px;top:380px" width="14" height="14" viewBox="0 0 14 14"><circle cx="8" cy="5" r="4.2" fill="#d8d8d8" stroke="#9a9a9a" stroke-width="0.8"/><circle cx="8" cy="5" r="1.2" fill="#fff" stroke="#888" stroke-width="0.6"/><rect x="0.5" y="8.5" width="11" height="2.4" rx="0.6" fill="#d0d2d4"/><rect x="0.5" y="10.5" width="11" height="2.6" fill="#3a3a3a"/><circle cx="9" cy="11.8" r="0.9" fill="#22e022"/></svg>
<div class="t" style="left:155px;top:384px;font-weight:bold;-webkit-text-stroke:0.1px;letter-spacing:-0.1px">CD-ROM 0</div>
<div class="t" style="left:141px;top:396px;">CD-ROM (D:)</div>
<div class="t" style="left:141px;top:420px;">No Media</div>
<div class="a" style="left:133px;top:456px;width:83px;height:1px;background:#a9a9a9"></div>
<div class="a" style="left:217px;top:455px;width:548px;height:1px;background:#a9a9a9"></div>
<div class="a" style="left:134px;top:474px;width:631px;height:1px;background:#fafafa"></div>
<div class="a" style="left:764px;top:474px;width:1px;height:16px;background:#a9a9a9"></div>
<div class="a" style="left:133px;top:489.5px;width:632px;height:1px;background:#a9a9a9"></div>
<div class="a" style="left:137.7px;top:477.3px;width:8.6px;height:9.3px;background:#000"></div>
<div class="t" style="left:150.5px;top:477px;">Unallocated</div>
<div class="a" style="left:205.3px;top:477.3px;width:8.6px;height:9.3px;background:#000080"></div>
<div class="t" style="left:217.6px;top:477px;">Primary partition</div>
<div class="a" style="left:132px;top:491px;width:634px;height:1px;background:#fdfdfd"></div>
<div class="a" style="left:590px;top:492px;width:1px;height:17px;background:#d8d8d8"></div>
<div class="a" style="left:696.5px;top:492px;width:1px;height:17px;background:#d8d8d8"></div>
<div class="a" style="left:132px;top:509px;width:634px;height:1px;background:#fdfdfd"></div>
<svg style="left:0;top:0" width="1024" height="576"><ellipse cx="531.3" cy="340.4" rx="61.3" ry="33.4" fill="none" stroke="#e51c1c" stroke-width="3" transform="rotate(-1.5 531.3 340.4)"/></svg>
<div class="a" style="left:0px;top:544px;width:1024px;height:32px;background:linear-gradient(90deg,#223842 0%,#223842 42%,#1e2e40 68%,#1b2842 100%)"></div>
<div class="a" style="left:80px;top:544px;width:38px;height:32px;background:#4e6068"></div>
<div class="a" style="left:80px;top:573.6px;width:38.5px;height:2.4px;background:#78b9f0"></div>
<div class="t" style="left:902px;top:554px;color:#fff;font-size:9.5px;letter-spacing:-0.3px;-webkit-text-stroke:0">ENG</div>
<div class="t" style="left:942.5px;top:547px;color:#fff;font-size:9.8px;letter-spacing:-0.2px;-webkit-text-stroke:0">13:46</div>
<div class="t" style="left:931px;top:561px;color:#fff;font-size:9.8px;letter-spacing:-0.2px;-webkit-text-stroke:0">2024/04/15</div>
<svg style="left:0;top:544px" width="1024" height="32"><polygon points="12.8,10.8 17.6,10.3 17.6,15.0 12.8,15.0" fill="#fff"/><polygon points="18.6,10.2 25.7,9.5 25.7,15.0 18.6,15.0" fill="#fff"/><polygon points="12.8,15.8 17.6,15.8 17.6,21.6 12.8,21.1" fill="#fff"/><polygon points="18.6,15.8 25.7,15.8 25.7,22.4 18.6,21.7" fill="#fff"/><path d="M51.2 9 L58.5 9 L59.5 10.2 L68.3 10.2 L68.3 22.7 L51.2 22.7 Z" fill="#f2c24a"/><rect x="51.2" y="11.2" width="17.1" height="11.5" fill="#ffd86e"/><rect x="51.2" y="9" width="7.3" height="1.6" fill="#e9a71c"/><path d="M54.5 22.7 L54.5 16.9 L65.4 16.9 L65.4 22.7 L62.2 22.7 L62.2 19.5 L58 19.5 L58 22.7 Z" fill="#3d9ee9"/><rect x="58" y="19.5" width="4.2" height="3.2" fill="#f6c94e"/><rect x="90.2" y="17" width="12.5" height="7.4" fill="#e4e4e4"/><rect x="100.5" y="17" width="2.2" height="7.4" fill="#c4c4c4"/><rect x="92.2" y="18.6" width="1.6" height="3.6" rx="0.6" fill="#3a3a3a"/><rect x="96.2" y="19" width="1.6" height="3.6" rx="0.6" fill="#3a3a3a"/><path d="M91 12.5 L99 9.2 L107.5 11.5 L99.5 15 Z" fill="#e6e6e6"/><path d="M91 12.5 L99.5 15 L99.5 17.6 L91 15.2 Z" fill="#2e2e2e"/><path d="M99.5 15 L107.5 11.5 L107.5 14.2 L99.5 17.6 Z" fill="#cdcdcd"/><circle cx="96.6" cy="15.6" r="0.9" fill="#2bd02b"/><path d="M825.2 18.3 L829.7 13.2 L834.2 18.3" fill="none" stroke="#fff" stroke-width="1.1"/><path d="M843.3 11.2 V13.6 M845.3 11.2 V13.6 M844.3 16.2 V19.8" stroke="#fff" stroke-width="0.9" fill="none"/><path d="M842.3 13.4 H846.3 V15 L845.2 16.3 H843.4 L842.3 15 Z" fill="#fff"/><rect x="846.2" y="13.5" width="8.6" height="6.2" fill="none" stroke="#fff" stroke-width="0.9"/><rect x="847.5" y="14.8" width="6" height="3.6" fill="#fff"/><rect x="855" y="15.3" width="1" height="2.6" fill="#fff"/><rect x="864.6" y="11.5" width="9.8" height="7.4" fill="none" stroke="#fff" stroke-width="0.9"/><path d="M869.5 18.9 V21.6 M866 21.9 H873" stroke="#fff" stroke-width="0.9"/><rect x="861.5" y="11.4" width="3.8" height="3.6" fill="#1f2d40" stroke="#fff" stroke-width="0.9"/><path d="M862.4 15 V21.6" stroke="#fff" stroke-width="0.9"/><path d="M881.2 14.8 H883.2 L886 12 V21 L883.2 18.2 H881.2 Z" fill="none" stroke="#fff" stroke-width="0.9"/><path d="M888.2 14.6 Q889.6 16.5 888.2 18.4 M890.2 12.8 Q892.6 16.5 890.2 20.2 M892.4 10.6 Q896 16.5 892.4 22.4" fill="none" stroke="#fff" stroke-width="0.9"/><path d="M991.5 9.5 L1003.8 9.5 L1003.8 19.5 L999.5 19.5 L997.6 21.8 L995.7 19.5 L991.5 19.5 Z" fill="none" stroke="#fff" stroke-width="1"/><rect x="1020" y="0" width="1" height="32" fill="#5c6470"/></svg>
</body></html>
